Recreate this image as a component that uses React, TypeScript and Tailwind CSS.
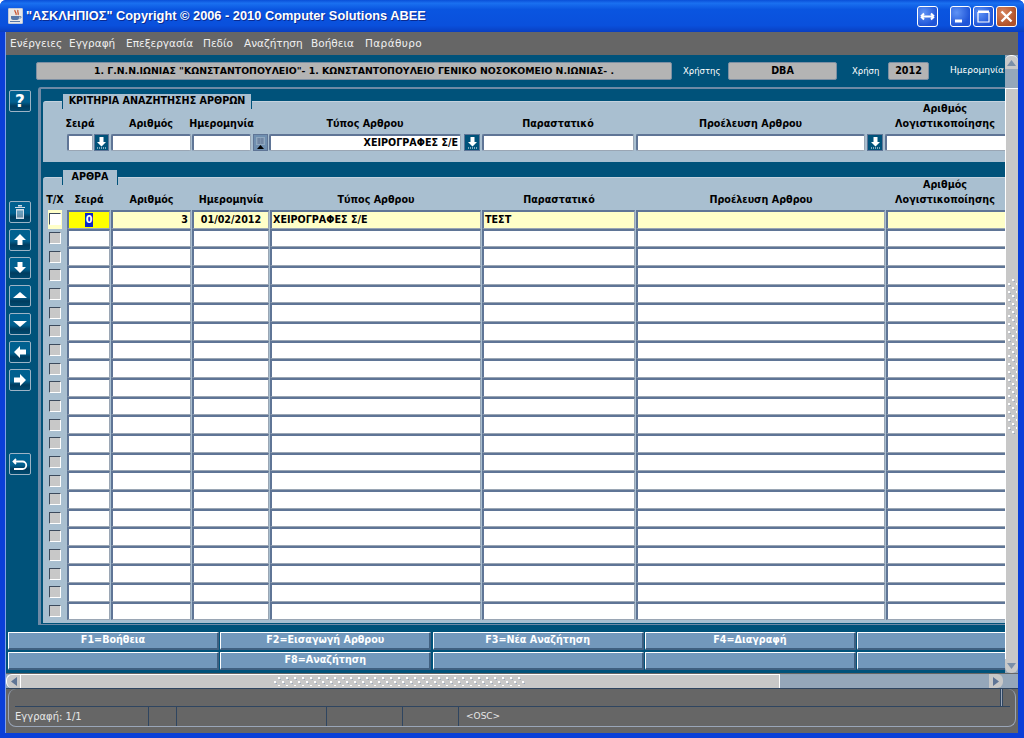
import React from "react";

function Dots({ w, h, id }: { w: number; h: number; id: string }) {
  return (
    <svg width={w} height={h} className="block shrink-0">
      <defs>
        <pattern id={id} width="8" height="8" patternUnits="userSpaceOnUse">
          <rect x="4" y="0" width="2" height="2" fill="#ffffff" />
          <rect x="6" y="2" width="1" height="1" fill="#9aa8ba" />
          <rect x="5" y="2" width="1" height="1" fill="#b0bac8" />
          <rect x="0" y="4" width="2" height="2" fill="#ffffff" />
          <rect x="2" y="6" width="1" height="1" fill="#9aa8ba" />
          <rect x="1" y="6" width="1" height="1" fill="#b0bac8" />
        </pattern>
      </defs>
      <rect width={w} height={h} fill={"url(#" + id + ")"} />
    </svg>
  );
}

function ToolButton({ children, className = "" }: { children: React.ReactNode; className?: string }) {
  return (
    <div className={"h-[22px] w-[22px] shrink-0 rounded-[2px] border border-[#9db4c6] bg-[linear-gradient(#00608f_0%,#00608f_55%,#003c5e_75%,#004a70_100%)] flex items-center justify-center " + className}>
      <svg width="20" height="20" viewBox="0 0 20 20" fill="#ffffff" stroke="none">{children}</svg>
    </div>
  );
}

function LovButton({ cal = false, w = "w-[15px]", ml = "ml-[1px]" }: { cal?: boolean; w?: string; ml?: string }) {
  return (
    <div className={"h-[17px] shrink-0 border border-[#5f7596] bg-[#00527a] flex items-center justify-center " + w + " " + ml}>
      <svg width="13" height="15" viewBox="0 0 13 15">
        {cal ? (
          <>
            <rect x="0" y="0" width="13" height="15" fill="#6f8fb0" />
            <path d="M2 2h9v8H2z" fill="#8fa8c0" />
            <path d="M3 4h7M3 6h7M3 8h7M5 3v6M8 3v6" stroke="#5f7596" strokeWidth="0.8" />
            <path d="M3 14l3.5-4 3.5 4z" fill="#000000" />
          </>
        ) : (
          <>
            <path d="M4.5 2h4v5h2.5l-4.5 4.5L2 7h2.5z" fill="#ffffff" />
            <path d="M2 13h1M4 13h1M6 13h1M8 13h1M10 13h1" stroke="#ffffff" strokeWidth="1" />
          </>
        )}
      </svg>
    </div>
  );
}

const fieldBorder = "border-t-2 border-l-2 border-b border-r border-t-[#5f7596] border-l-[#5f7596] border-b-[#9aa6b4] border-r-[#9aa6b4]";

function SearchField({ w, ml = "", children }: { w: string; ml?: string; children?: React.ReactNode }) {
  return (
    <div className={"h-[17px] shrink-0 rounded-[2px] bg-white flex items-center justify-end pr-[2px] text-[9.6px] font-bold text-black whitespace-nowrap " + fieldBorder + " " + w + " " + ml}>
      {children}
    </div>
  );
}

function Label({ w, ml = "", children, top }: { w: string; ml?: string; children: React.ReactNode; top?: string }) {
  return (
    <div className={"shrink-0 flex flex-col items-center justify-end whitespace-nowrap text-[9.6px] font-bold leading-[15px] text-black " + w + " " + ml}>
      {top ? <span>{top}</span> : null}
      <span>{children}</span>
    </div>
  );
}

function Cell({ w, bg = "bg-white", className = "", children }: { w: string; bg?: string; className?: string; children?: React.ReactNode }) {
  return (
    <div className={"h-full shrink-0 mr-[1px] flex items-center text-[9.6px] font-bold text-black whitespace-nowrap overflow-hidden " + fieldBorder + " " + w + " " + bg + " " + className}>
      {children}
    </div>
  );
}

function Row({ first = false }: { first?: boolean }) {
  const bg = first ? "bg-[#ffffc8]" : "bg-white";
  return (
    <div className="flex h-[18.67px] shrink-0 items-stretch">
      <div className={"w-[14px] shrink-0 mr-[5px] flex items-center justify-center " + (first ? "bg-[#ffffc8]" : "")}>
        <div className={"h-[12px] w-[12px] border border-t-[#3c4a5c] border-l-[#3c4a5c] border-b-white border-r-white " + (first ? "bg-white" : "bg-[#c8c8c8]")} />
      </div>
      <Cell w="w-[43px]" bg={first ? "bg-[#ffff00]" : "bg-white"} className="justify-center">
        {first ? <span className="bg-[#0a26c8] px-[1px] text-white">0</span> : null}
      </Cell>
      <Cell w="w-[80px]" bg={bg} className="justify-end pr-[2px]">{first ? "3" : null}</Cell>
      <Cell w="w-[77px]" bg={bg} className="justify-center">{first ? "01/02/2012" : null}</Cell>
      <Cell w="w-[211px]" bg={bg} className="pl-[1px]">{first ? "ΧΕΙΡΟΓΡΑΦΕΣ Σ/Ε" : null}</Cell>
      <Cell w="w-[153px]" bg={bg} className="pl-[1px]">{first ? "ΤΕΣΤ" : null}</Cell>
      <Cell w="w-[249px]" bg={bg} />
      <Cell w="w-[130px]" bg={bg} />
    </div>
  );
}

function Tab({ children, className }: { children: React.ReactNode; className: string }) {
  return (
    <div className={"absolute top-[-8px] h-[15px] border-l border-r border-[#00527a] border-t-[#c4d2de] bg-[#a9bfd0] flex items-center justify-center text-[9.6px] font-bold text-black whitespace-nowrap " + className}>
      {children}
    </div>
  );
}

function WinButton({ className = "", children }: { className?: string; children: React.ReactNode }) {
  return (
    <div className={"h-[21px] w-[21px] rounded-[3px] border border-white flex items-center justify-center bg-[radial-gradient(circle_at_30%_30%,#5f93f5,#1f55d8_70%)] " + className}>
      <svg width="19" height="19" viewBox="0 0 19 19" fill="none">{children}</svg>
    </div>
  );
}

function FKey({ children }: { children?: React.ReactNode }) {
  return (
    <div className="h-[18px] w-[211px] shrink-0 rounded-[1px] border-t border-l border-white border-b-2 border-r-2 border-b-[#3f5f80] border-r-[#3f5f80] bg-[#7298bc] flex items-center justify-center text-[9.6px] font-bold text-white whitespace-nowrap">
      {children}
    </div>
  );
}

export default function App() {
  return (
    <div className="flex h-[738px] w-[1024px] flex-col overflow-hidden rounded-t-[6px] bg-[#0a3fd8] font-['DejaVu_Sans',sans-serif]">
      {/* title bar */}
      <div className="flex h-[32px] shrink-0 items-center bg-[linear-gradient(#0a4fd8_0%,#1a70f0_10%,#0a55e0_30%,#0a50dc_80%,#0a3fc0_100%)] pl-[8px] pr-[7px]">
        <div className="flex h-[16px] w-[15px] items-center justify-center rounded-[1px] border border-[#c0c8d8] bg-[#e8e8e8]">
          <svg width="13" height="14" viewBox="0 0 13 14" fill="none">
            <path d="M6 1C5 3 8 3 7 6M9 1C8 3 10 4 9 6" stroke="#c8502a" strokeWidth="1.2" />
            <path d="M2 7h8v2c0 1-1 2-2 2H4C3 11 2 10 2 9z" fill="#5878a8" />
            <path d="M10 7.5h2v1.5h-2" stroke="#5878a8" strokeWidth="0.8" />
            <path d="M1 12.5h10" stroke="#5878a8" strokeWidth="1.2" />
          </svg>
        </div>
        <div className="ml-[3px] whitespace-nowrap font-['Liberation_Sans',sans-serif] text-[12.8px] font-bold text-white [text-shadow:1px_1px_0_#0a2a90]">
          "ΑΣΚΛΗΠΙΟΣ" Copyright © 2006 - 2010 Computer Solutions ABEE
        </div>
        <div className="flex-1" />
        <WinButton className="mr-[12px]">
          <path d="M3 9.5h13M3 9.5l3-3M3 9.5l3 3M16 9.5l-3-3M16 9.5l-3 3" stroke="#ffffff" strokeWidth="2" />
        </WinButton>
        <WinButton className="mr-[2px]">
          <path d="M4 14h7" stroke="#ffffff" strokeWidth="3" />
        </WinButton>
        <WinButton className="mr-[2px]">
          <path d="M4 5.5h11V15H4z" stroke="#ffffff" strokeWidth="1.2" />
          <path d="M4 4.5h11" stroke="#ffffff" strokeWidth="2" />
        </WinButton>
        <WinButton className="bg-[radial-gradient(circle_at_30%_30%,#d8855f,#b0522a_70%)]">
          <path d="M4.5 4.5l10 10M14.5 4.5l-10 10" stroke="#ffffff" strokeWidth="2.4" />
        </WinButton>
      </div>

      <div className="flex min-h-0 flex-1">
        <div className="w-[5px] shrink-0 bg-[#0a3fd8]" />
        <div className="flex min-w-0 flex-1 flex-col bg-[#666666] border-l border-[#7fa0e8]">
          {/* menu */}
          <div className="flex h-[23px] shrink-0 items-center pl-[4px] text-[10.5px] text-[#f0f0f0]">
            <span className="w-[59px]">Ενέργειες</span>
            <span className="w-[57px]">Εγγραφή</span>
            <span className="w-[77px]">Επεξεργασία</span>
            <span className="w-[41px]">Πεδίο</span>
            <span className="w-[67px]">Αναζήτηση</span>
            <span className="w-[54px]">Βοήθεια</span>
            <span className="tracking-[0.4px]">Παράθυρο</span>
          </div>

          {/* content + vertical scroll */}
          <div className="flex h-[618px] shrink-0">
            <div className="min-w-0 flex-1 overflow-hidden bg-[#00527a]">
              <div className="flex w-[1080px] flex-col">
                {/* info bar */}
                <div className="mt-[7px] flex h-[18px] items-stretch pl-[30px] text-[8.5px] text-white">
                  <div className="flex w-[636px] items-center justify-center rounded-[2px] border border-[#7d8fa3] bg-[#b4b4b4] text-[9.35px] font-bold text-black">
                    1. Γ.Ν.Ν.ΙΩΝΙΑΣ "ΚΩΝΣΤΑΝΤΟΠΟΥΛΕΙΟ"- 1. ΚΩΝΣΤΑΝΤΟΠΟΥΛΕΙΟ ΓΕΝΙΚΟ ΝΟΣΟΚΟΜΕΙΟ Ν.ΙΩΝΙΑΣ- .
                  </div>
                  <div className="ml-[11px] flex w-[45px] items-center">Χρήστης</div>
                  <div className="flex w-[109px] items-center justify-center rounded-[2px] border border-[#7d8fa3] bg-[#b4b4b4] text-[9.6px] font-bold text-black">DBA</div>
                  <div className="ml-[15px] flex w-[36px] items-center">Χρήση</div>
                  <div className="flex w-[41px] items-center justify-center rounded-[2px] border border-[#7d8fa3] bg-[#b4b4b4] text-[9.6px] font-bold text-black">2012</div>
                  <div className="ml-[21px] flex items-center text-[9px]">Ημερομηνία</div>
                </div>

                <div className="mt-[7px] flex">
                  {/* side toolbar */}
                  <div className="flex w-[32px] shrink-0 flex-col pl-[3px] pt-[3px]">
                    <ToolButton>
                      <text x="10" y="16" textAnchor="middle" fontSize="17" fontWeight="bold" fontFamily="DejaVu Sans" fill="#ffffff">?</text>
                    </ToolButton>
                    <ToolButton className="mt-[89px]">
                      <path d="M5 5h10v1H5zM8 3h4v1.5H8zM6 7h8v10H6zM7.5 8.5v7h1v-7zM9.5 8.5v7h1v-7zM11.5 8.5v7h1v-7z" fill="#d0dce8" fillRule="evenodd" />
                    </ToolButton>
                    <ToolButton className="mt-[6px]"><path d="M10 4l6 6h-3.5v5h-5v-5H4z" /></ToolButton>
                    <ToolButton className="mt-[6px]"><path d="M7.5 4h5v5H16l-6 6-6-6h3.5z" /></ToolButton>
                    <ToolButton className="mt-[6px]"><path d="M10 6l7 6H3z" /></ToolButton>
                    <ToolButton className="mt-[6px]"><path d="M3 7h14l-7 6z" /></ToolButton>
                    <ToolButton className="mt-[6px]"><path d="M4 10l6-6v3.5h6v5h-6V16z" /></ToolButton>
                    <ToolButton className="mt-[6px]"><path d="M16 10l-6-6v3.5H4v5h6V16z" /></ToolButton>
                    <ToolButton className="mt-[62px]">
                      <path d="M6 5L3.5 7.5 6 10M4 7.5h8.5a3.5 3.5 0 0 1 0 7.5H4" fill="none" stroke="#ffffff" strokeWidth="1.8" />
                    </ToolButton>
                  </div>

                  {/* frame */}
                  <div className="flex h-[538px] flex-1 flex-col rounded-tl-[3px] border-l-[3px] border-t-2 border-b border-[#6f8aa6] pl-[2px] pt-[12px]">
                    {/* criteria panel */}
                    <div className="relative h-[61px] shrink-0 rounded-tl-[3px] border-t border-[#c4d2de] bg-[#a9bfd0]">
                      <Tab className="left-[19px] w-[190px]">ΚΡΙΤΗΡΙΑ ΑΝΑΖΗΤΗΣΗΣ ΑΡΘΡΩΝ</Tab>
                      <div className="ml-[24px] flex h-[32px] items-end pb-[3px]">
                        <Label w="w-[26px]">Σειρά</Label>
                        <Label w="w-[80px]" ml="ml-[18px]">Αριθμός</Label>
                        <Label w="w-[59px]" ml="ml-[1px]">Ημερομηνία</Label>
                        <Label w="w-[192px]" ml="ml-[18px]">Τύπος Αρθρου</Label>
                        <Label w="w-[152px]" ml="ml-[21px]">Παραστατικό</Label>
                        <Label w="w-[229px]" ml="ml-[2px]">Προέλευση Αρθρου</Label>
                        <Label w="w-[120px]" ml="ml-[20px]" top="Αριθμός">Λογιστικοποίησης</Label>
                      </div>
                      <div className="ml-[24px] flex">
                        <SearchField w="w-[26px]" />
                        <LovButton />
                        <SearchField w="w-[80px]" ml="ml-[2px]" />
                        <SearchField w="w-[59px]" ml="ml-[1px]" />
                        <LovButton cal ml="ml-[2px]" />
                        <SearchField w="w-[192px]" ml="ml-[1px]">ΧΕΙΡΟΓΡΑΦΕΣ Σ/Ε</SearchField>
                        <LovButton w="w-[16px]" ml="ml-[3px]" />
                        <SearchField w="w-[152px]" ml="ml-[2px]" />
                        <SearchField w="w-[229px]" ml="ml-[2px]" />
                        <LovButton w="w-[16px]" ml="ml-[2px]" />
                        <SearchField w="w-[130px]" ml="ml-[2px]" />
                      </div>
                    </div>

                    {/* records panel */}
                    <div className="relative mt-[15px] h-[446px] shrink-0 rounded-tl-[3px] border-t border-[#c4d2de] bg-[#a9bfd0] pl-[5px]">
                      <Tab className="left-[19px] w-[56px]">ΑΡΘΡΑ</Tab>
                      <div className="flex h-[32px] items-end pb-[3px]">
                        <Label w="w-[14px]">Τ/Χ</Label>
                        <Label w="w-[44px]" ml="ml-[5px]">Σειρά</Label>
                        <Label w="w-[81px]">Αριθμός</Label>
                        <Label w="w-[78px]">Ημερομηνία</Label>
                        <Label w="w-[212px]">Τύπος Αρθρου</Label>
                        <Label w="w-[154px]">Παραστατικό</Label>
                        <Label w="w-[250px]">Προέλευση Αρθρου</Label>
                        <Label w="w-[118px]" top="Αριθμός">Λογιστικοποίησης</Label>
                      </div>
                      <div className="flex flex-col">
                        {Array.from({ length: 22 }).map((_, i) => (
                          <Row key={i} first={i === 0} />
                        ))}
                      </div>
                    </div>
                  </div>
                </div>

                {/* function keys */}
                <div className="mt-[7px] flex flex-col gap-[2px] pl-[2px]">
                  <div className="flex gap-[1.3px]">
                    <FKey>F1=Βοήθεια</FKey>
                    <FKey>F2=Εισαγωγή Αρθρου</FKey>
                    <FKey>F3=Νέα Αναζήτηση</FKey>
                    <FKey>F4=Διαγραφή</FKey>
                    <FKey />
                  </div>
                  <div className="flex gap-[1.3px]">
                    <FKey />
                    <FKey>F8=Αναζήτηση</FKey>
                    <FKey />
                    <FKey />
                    <FKey />
                  </div>
                </div>
              </div>
            </div>

            {/* vertical scrollbar */}
            <div className="flex w-[13px] shrink-0 flex-col bg-[#95a7ba]">
              <div className="flex h-[14px] items-center justify-center rounded-t-[6px] border-t border-white bg-[#c8c8c8]">
                <svg width="9" height="6" viewBox="0 0 9 6"><path d="M4.5 0L9 6H0z" fill="#7a8fa8" /></svg>
              </div>
              <div className="h-[19px]" />
              <div className="flex flex-1 flex-col border-l border-t border-white bg-[#c8c8c8] pl-[2px] pt-[190px]">
                <Dots w={9} h={156} id="vdots" />
              </div>
              <div className="flex h-[14px] items-center justify-center rounded-b-[6px] bg-[#c8c8c8]">
                <svg width="9" height="6" viewBox="0 0 9 6"><path d="M0 0h9L4.5 6z" fill="#7a8fa8" /></svg>
              </div>
            </div>
          </div>

          {/* horizontal scrollbar */}
          <div className="mt-[1px] flex h-[14px] shrink-0 items-stretch bg-[#95a7ba]">
            <div className="flex w-[14px] items-center justify-center rounded-l-[6px] border-l border-t border-white bg-[#c8c8c8]">
              <svg width="6" height="9" viewBox="0 0 6 9"><path d="M6 0v9L0 4.5z" fill="#5f7596" /></svg>
            </div>
            <div className="flex w-[760px] items-center justify-center border-l border-r border-t border-white bg-[#c8c8c8]">
              <Dots w={252} h={9} id="hdots" />
            </div>
            <div className="w-[209px]" />
            <div className="flex w-[14px] items-center justify-center rounded-r-[6px] bg-[#c8c8c8]">
              <svg width="6" height="9" viewBox="0 0 6 9"><path d="M0 0v9l6-4.5z" fill="#5f7596" /></svg>
            </div>
          </div>

          {/* status */}
          <div className="flex flex-1 flex-col border-t border-[#2f4560] px-[2px]">
            <div className="flex h-[38px] flex-col rounded-[8px] border-b border-l border-r border-[#9aa6b8]">
              <div className="ml-[6px] mr-[5px] flex h-[18px] justify-end border-b border-[#2f4560] pr-[7px]">
                <div className="w-[3px] border-l border-r border-[#2f4560] bg-[#9aa6b8]" />
              </div>
              <div className="ml-[6px] flex flex-1 items-center text-[10px] text-[#e8e8e8]">
                <div className="flex h-full w-[134px] items-center border-r border-[#2f4560]">Εγγραφή: 1/1</div>
                <div className="h-full w-[28px] border-r border-[#2f4560]" />
                <div className="h-full w-[150px] border-r border-[#2f4560]" />
                <div className="h-full w-[76px] border-r border-[#2f4560]" />
                <div className="h-full w-[56px] border-r border-[#2f4560]" />
                <div className="ml-[7px] text-[9px]">&lt;OSC&gt;</div>
              </div>
            </div>
          </div>
        </div>
        <div className="w-[6px] shrink-0 bg-[#0a3fd8]" />
      </div>
      <div className="h-[5px] shrink-0 bg-[#0a3fd8]" />
    </div>
  );
}
